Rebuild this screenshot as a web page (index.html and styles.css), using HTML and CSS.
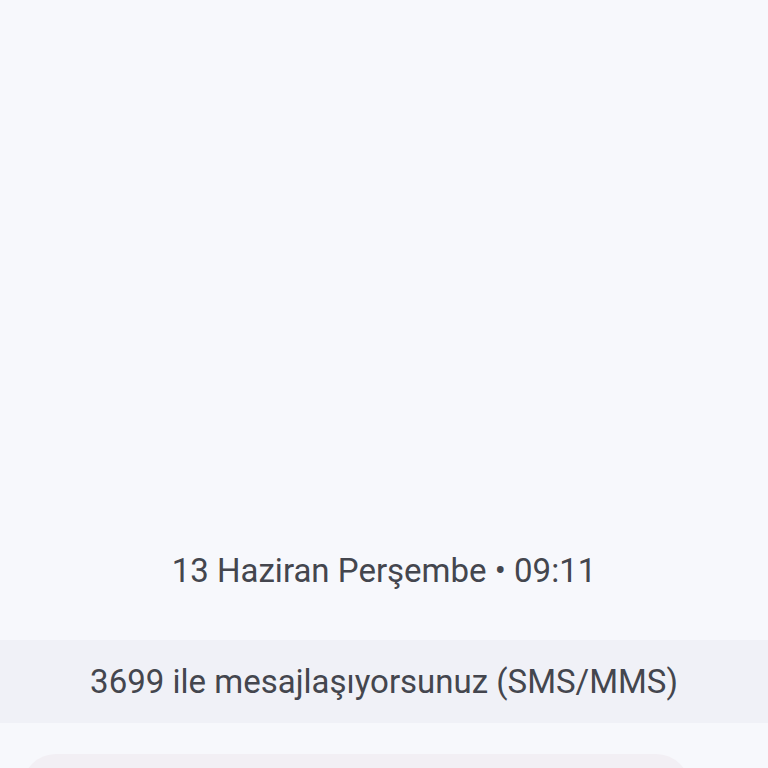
FILE: index.html
```html
<!DOCTYPE html>
<html lang="tr">
<head>
    <meta charset="UTF-8">
    <title>3699</title>
    <link rel="stylesheet" href="styles.css">
</head>
<body>
    <div class="screen">
        <div class="thread">
            <p class="date">13 Haziran Perşembe • 09:11</p>
        </div>
        <div class="notice">3699 ile mesajlaşıyorsunuz (SMS/MMS)</div>
        <div class="compose-bar">
            <div class="composer"></div>
        </div>
    </div>
</body>
</html>
```

FILE: styles.css
```css
html,body{
    margin: 0;
    background: #f7f8fc;
}
.screen{
    height: 768px;
    overflow: hidden;
    display: flex;
    flex-direction: column;
    font-family: Roboto, "Noto Sans", sans-serif;
    color: #44464e;
}
.thread{
    flex: 0 0 640px;
    display: flex;
    flex-direction: column;
    justify-content: flex-end;
}
.date{
    margin: 0 0 49px;
    text-align: center;
    font-size: 33px;
    line-height: 40px;
}
.notice{
    flex: 0 0 83px;
    display: flex;
    align-items: center;
    justify-content: center;
    background: #f0f1f7;
    font-size: 33px;
}
.compose-bar{
    flex: 0 0 80px;
    display: flex;
    padding: 31px 78px 0 22px;
}
.composer{
    flex: 1;
    border-radius: 34px 34px 0 0;
    background: #f2eff4;
}
```
